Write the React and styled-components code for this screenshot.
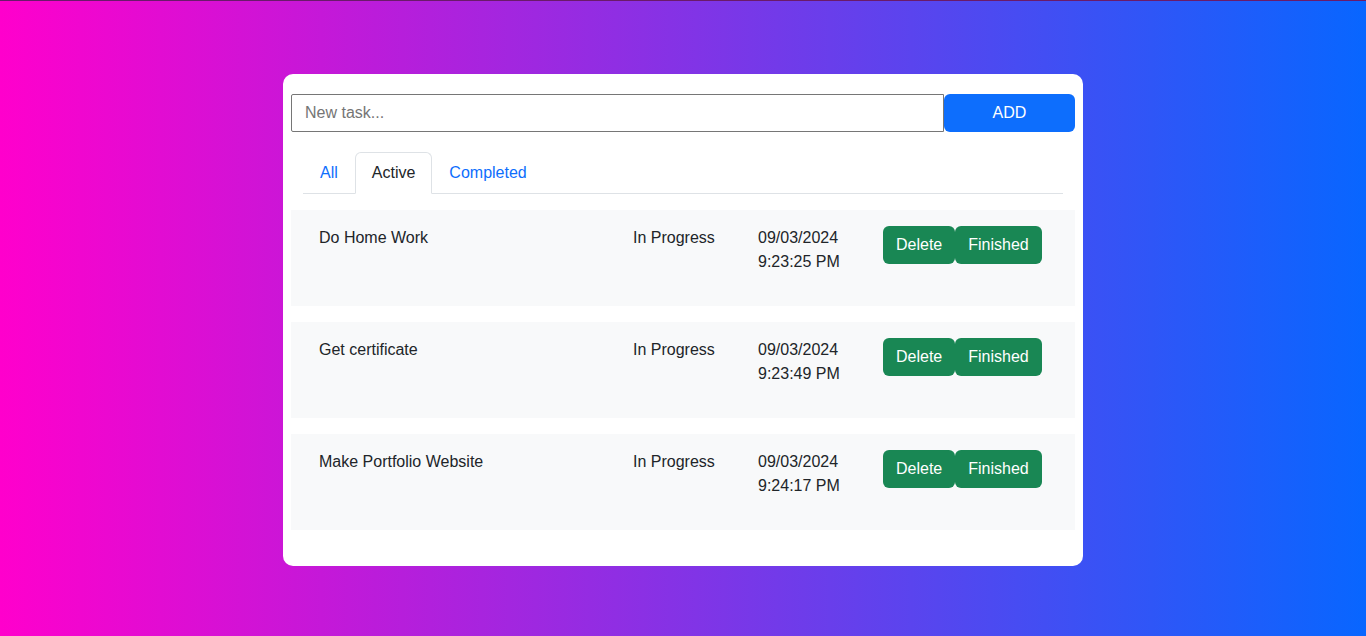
import { useState } from "react";
import styled, { createGlobalStyle } from "styled-components";

const GlobalStyle = createGlobalStyle`
  html, body {
    margin: 0;
    padding: 0;
  }
  body {
    font-family: "Liberation Sans", Arial, sans-serif;
    font-size: 16px;
    line-height: 1.5;
    color: #212529;
  }
  * { box-sizing: border-box; }
`;

const tasks = [
  { id: 1, title: "Do Home Work", status: "In Progress", date: "09/03/2024", time: "9:23:25 PM" },
  { id: 2, title: "Get certificate", status: "In Progress", date: "09/03/2024", time: "9:23:49 PM" },
  { id: 3, title: "Make Portfolio Website", status: "In Progress", date: "09/03/2024", time: "9:24:17 PM" },
];

export default function App() {
  const [tab, setTab] = useState("Active");

  return (
    <>
      <GlobalStyle />
      <Page>
        <Card>
          <Form onSubmit={(e) => e.preventDefault()}>
            <TaskInput type="text" placeholder="New task..." />
            <AddButton type="submit">ADD</AddButton>
          </Form>

          <Tabs>
            {["All", "Active", "Completed"].map((t) => (
              <Tab key={t} $active={tab === t} onClick={() => setTab(t)}>
                {t}
              </Tab>
            ))}
          </Tabs>

          <List>
            {tasks.map((task) => (
              <Row key={task.id}>
                <Cell>{task.title}</Cell>
                <Cell>{task.status}</Cell>
                <Cell>
                  {task.date}
                  <br />
                  {task.time}
                </Cell>
                <Actions>
                  <GreenButton>Delete</GreenButton>
                  <GreenButton>Finished</GreenButton>
                </Actions>
              </Row>
            ))}
          </List>
        </Card>
      </Page>
    </>
  );
}

const Page = styled.div`
  min-height: 636px;
  border-top: 1px solid #6a1a6a;
  background: linear-gradient(90deg, #ff00cc 0%, #0866ff 100%);
  display: flex;
  justify-content: center;
  padding-top: 73px;
`;

const Card = styled.div`
  width: 800px;
  height: 492px;
  background: #fff;
  border-radius: 10px;
  padding: 20px 8px 36px;
`;

const Form = styled.form`
  display: flex;
  height: 38px;
`;

const TaskInput = styled.input`
  flex: 1;
  height: 38px;
  border: 1px solid #767676;
  border-radius: 2px 0 0 2px;
  padding: 0 13px;
  font-family: "Liberation Sans", Arial, sans-serif;
  font-size: 16px;
  color: #212529;
  outline: none;
  &::placeholder {
    color: #757575;
  }
`;

const AddButton = styled.button`
  width: 131px;
  height: 38px;
  border: none;
  border-radius: 6px;
  background: #0d6efd;
  color: #fff;
  font-family: "Liberation Sans", Arial, sans-serif;
  font-size: 16px;
  cursor: pointer;
`;

const Tabs = styled.div`
  display: flex;
  margin: 20px 12px 16px;
  border-bottom: 1px solid #dee2e6;
`;

const Tab = styled.div`
  padding: 8px 16px;
  margin-bottom: -1px;
  line-height: 24px;
  cursor: pointer;
  color: ${({ $active }) => ($active ? "#212529" : "#0d6efd")};
  background: ${({ $active }) => ($active ? "#fff" : "transparent")};
  border: 1px solid ${({ $active }) => ($active ? "#dee2e6" : "transparent")};
  border-bottom-color: ${({ $active }) => ($active ? "#fff" : "transparent")};
  border-radius: 6px 6px 0 0;
`;

const List = styled.div`
  display: flex;
  flex-direction: column;
  gap: 16px;
`;

const Row = styled.div`
  display: grid;
  grid-template-columns: 314px 125px 125px auto;
  align-items: start;
  height: 96px;
  padding: 16px 0 0 28px;
  background: #f8f9fa;
`;

const Cell = styled.div`
  line-height: 24px;
`;

const Actions = styled.div`
  display: flex;
`;

const GreenButton = styled.button`
  height: 38px;
  padding: 6px 13px;
  border: none;
  border-radius: 6px;
  background: #198754;
  color: #fff;
  font-family: "Liberation Sans", Arial, sans-serif;
  font-size: 16px;
  line-height: 24px;
  cursor: pointer;
`;
